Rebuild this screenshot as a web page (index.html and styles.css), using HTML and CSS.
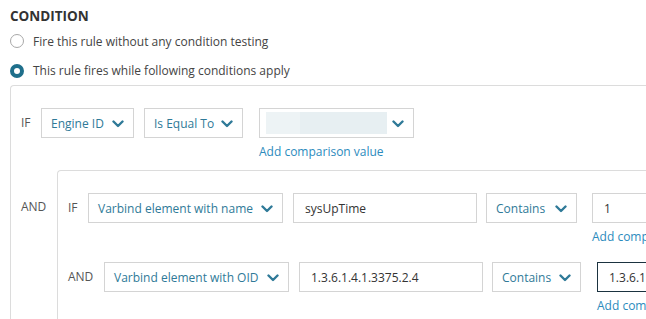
FILE: index.html
```html
<!DOCTYPE html>
<html>
<head>
<meta charset="utf-8">
<link rel="stylesheet" href="styles.css">
</head>
<body>
<div class="page">
  <div class="title">CONDITION</div>
  <label class="radio-row r1"><span class="radio"></span><span>Fire this rule without any condition testing</span></label>
  <label class="radio-row r2"><span class="radio on"></span><span>This rule fires while following conditions apply</span></label>

  <div class="box outer">
    <div class="row">
      <span class="lbl l-if">IF</span>
      <div class="sel w-engine"><span>Engine ID</span><svg class="chev" viewBox="0 0 12 8"><path d="M1.5 1.5 L6 6 L10.5 1.5"/></svg></div>
      <div class="sel w-equal"><span>Is Equal To</span><svg class="chev" viewBox="0 0 12 8"><path d="M1.5 1.5 L6 6 L10.5 1.5"/></svg></div>
      <div class="valcol">
        <div class="sel w-val"><span class="ph"></span><svg class="chev" viewBox="0 0 12 8"><path d="M1.5 1.5 L6 6 L10.5 1.5"/></svg></div>
        <a class="link">Add comparison value</a>
      </div>
    </div>

    <div class="row and-row">
      <span class="lbl l-and lbl-top">AND</span>
      <div class="box inner">
        <div class="row">
          <span class="lbl l-if">IF</span>
          <div class="sel w-vname"><span>Varbind element with name</span><svg class="chev" viewBox="0 0 12 8"><path d="M1.5 1.5 L6 6 L10.5 1.5"/></svg></div>
          <div class="inp w-inp">sysUpTime</div>
          <div class="sel w-cont"><span>Contains</span><svg class="chev" viewBox="0 0 12 8"><path d="M1.5 1.5 L6 6 L10.5 1.5"/></svg></div>
          <div class="valcol">
            <div class="inp w-last">1</div>
            <a class="link">Add comparison value</a>
          </div>
        </div>
        <div class="row row2">
          <span class="lbl l-and">AND</span>
          <div class="sel w-void"><span>Varbind element with OID</span><svg class="chev" viewBox="0 0 12 8"><path d="M1.5 1.5 L6 6 L10.5 1.5"/></svg></div>
          <div class="inp w-inp">1.3.6.1.4.1.3375.2.4</div>
          <div class="sel w-cont2"><span>Contains</span><svg class="chev" viewBox="0 0 12 8"><path d="M1.5 1.5 L6 6 L10.5 1.5"/></svg></div>
          <div class="valcol">
            <div class="inp w-last active">1.3.6.1.4.1.3375.2.4</div>
            <a class="link">Add comparison value</a>
          </div>
        </div>
      </div>
    </div>
  </div>
</div>
</body>
</html>
```
FILE: styles.css
```css
html, body {
  margin: 0;
  padding: 0;
  background: #fff;
  width: 646px;
  height: 319px;
  overflow: hidden;
}
body {
  font-family: "Open Sans", "DejaVu Sans", sans-serif;
  font-size: 12px;
  color: #444;
}
.page {
  padding: 0 0 0 10px;
  width: 900px;
}
.title {
  font-size: 13.5px;
  font-weight: 700;
  color: #333;
  height: 26px;
  padding-top: 6px;
  box-sizing: border-box;
  line-height: 20px;
}
.radio-row {
  display: flex;
  align-items: center;
  height: 30px;
  gap: 9px;
  color: #444;
}
.r2 { height: 29px; }
.radio {
  width: 14px;
  height: 14px;
  box-sizing: border-box;
  border: 1.5px solid #a8a8a8;
  border-radius: 50%;
  display: inline-block;
}
.radio.on {
  border: 4.5px solid #1f6f8b;
  background: #fff;
}
.box {
  border: 1px solid #dcdcdc;
  border-right: none;
  border-bottom: none;
  border-radius: 4px 0 0 0;
}
.outer {
  padding: 22px 0 0 10px;
  height: 400px;
}
.row {
  display: flex;
  align-items: flex-start;
  white-space: nowrap;
}
.lbl {
  line-height: 30px;
  height: 30px;
  color: #555;
  flex: none;
}
.l-if { width: 20px; }
.l-and { width: 36px; }
.lbl-top { margin-top: 22px; }
.and-row { margin-top: 9px; }
.sel, .inp {
  height: 30px;
  box-sizing: border-box;
  border: 1px solid #d4d4d4;
  display: flex;
  align-items: center;
  margin-right: 10px;
  flex: none;
}
.sel {
  color: #2f7a98;
  padding: 0 9px 0 9px;
  justify-content: space-between;
}
.inp {
  color: #333;
  padding: 0 11px;
}
.chev {
  width: 12px;
  height: 8px;
  fill: none;
  stroke: #2f7a98;
  stroke-width: 2.4;
  stroke-linecap: round;
  stroke-linejoin: round;
  margin-top: 1px;
}
.ph {
  display: block;
  width: 121px;
  height: 22px;
  background: linear-gradient(to right, #edf3f5 0, #edf3f5 34px, #e7eff2 34px);
  margin-left: -3px;
}
.valcol {
  display: flex;
  flex-direction: column;
  margin-left: 6px;
}
.link {
  color: #2c8bbd;
  line-height: 18px;
  margin-top: 5px;
}
.w-engine { width: 93px; }
.w-equal { width: 99px; }
.w-val { width: 155px; padding-left: 9px; }
.inner {
  padding: 22px 0 0 10px;
  height: 300px;
  flex: 1;
}
.w-vname { width: 195px; }
.w-inp { width: 184px; margin-right: 9px; }
.w-cont { width: 91px; margin-right: 9px; }
.w-void { width: 185px; }
.w-cont2 { width: 89px; }
.w-last { width: 200px; }
.row2 { margin-top: 16px; }
.active {
  border: 1px solid #1b3340;
}
```
